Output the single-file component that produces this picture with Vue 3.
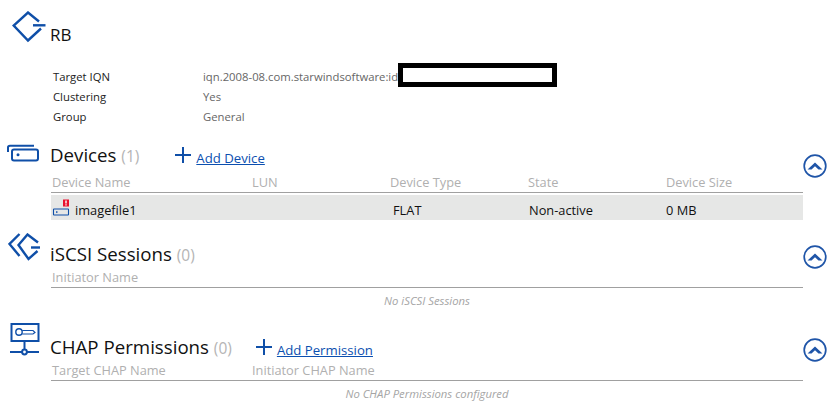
<script setup>
const props_ = [
  { k: 'Target IQN', v: 'iqn.2008-08.com.starwindsoftware:id', redacted: true },
  { k: 'Clustering', v: 'Yes' },
  { k: 'Group', v: 'General' },
]
const deviceCols = ['Device Name', 'LUN', 'Device Type', 'State', 'Device Size']
</script>

<template>
  <div class="page">
    <header class="head">
      <svg class="head-icon" width="34" height="32" viewBox="0 0 34 32" fill="none" stroke="#0f4fa8" stroke-width="2.4">
        <path d="M27 10.5 L16 1.5 L1.7 14.5 L16 29.5 L29 17.5" />
        <path d="M21 14.3 H33.5" />
      </svg>
      <h1 class="name">RB</h1>
    </header>

    <dl class="props">
      <template v-for="p in props_" :key="p.k">
        <dt>{{ p.k }}</dt>
        <dd>{{ p.v }}<span v-if="p.redacted" class="redact"></span></dd>
      </template>
    </dl>

    <section class="sec sec-dev">
      <svg class="icon" width="33" height="18" viewBox="0 0 33 18" fill="none" stroke="#0f4fa8" stroke-width="2">
        <path d="M1 8 V3.5 Q1 1.7 3 1.7 H27" />
        <rect x="5" y="5.5" width="26" height="11" rx="2" />
        <circle cx="11" cy="10.8" r="1.5" fill="#0f4fa8" stroke="none" />
      </svg>
      <div class="body">
        <div class="title-row">
          <h2>Devices <span class="count">(1)</span></h2>
          <a class="add add-dev" href="#"><span class="plus"></span><span class="link">Add Device</span></a>
        </div>
        <div class="cols five">
          <span v-for="c in deviceCols" :key="c">{{ c }}</span>
        </div>
        <div class="row five">
          <span class="dev-name">
            <svg width="18" height="20" viewBox="0 0 18 20" fill="none">
              <rect x="11" y="1.5" width="6" height="7" fill="#e8112d" />
              <rect x="13.3" y="2.5" width="1.4" height="3" fill="#fff" />
              <rect x="13.3" y="6.3" width="1.4" height="1.2" fill="#fff" />
              <rect x="1.5" y="11" width="15" height="6" rx="0.5" fill="none" stroke="#0f4fa8" stroke-width="1.1" />
              <rect x="4" y="13.3" width="1.5" height="1.5" fill="#0f4fa8" />
            </svg>
            imagefile1
          </span>
          <span></span>
          <span class="pad-type">FLAT</span>
          <span class="pad-state">Non-active</span>
          <span>0 MB</span>
        </div>
      </div>
      <button class="toggle" aria-label="collapse"><svg width="24" height="24" viewBox="0 0 24 24" fill="none">
        <circle cx="12" cy="12" r="10.8" stroke="#1f55a8" stroke-width="1.7" />
        <path d="M4.5 15.5 L12 8.5 L19.5 15.5 L15.5 15.5 L12 12.3 L8.5 15.5 Z" fill="#1f55a8" />
      </svg></button>
    </section>

    <section class="sec sec-iscsi">
      <svg class="icon" width="33" height="28" viewBox="0 0 33 28" fill="none" stroke="#0f4fa8" stroke-width="2.4">
        <path d="M11.5 1 L1.5 11 L11.5 23" />
        <path d="M30 9.5 L19.5 1.5 L10.5 12 L20.5 26 L29.5 18" />
        <path d="M23 14.5 H32" />
      </svg>
      <div class="body">
        <div class="title-row">
          <h2>iSCSI Sessions <span class="count">(0)</span></h2>
        </div>
        <div class="cols"><span>Initiator Name</span></div>
        <p class="empty">No iSCSI Sessions</p>
      </div>
      <button class="toggle" aria-label="collapse"><svg width="24" height="24" viewBox="0 0 24 24" fill="none">
        <circle cx="12" cy="12" r="10.8" stroke="#1f55a8" stroke-width="1.7" />
        <path d="M4.5 15.5 L12 8.5 L19.5 15.5 L15.5 15.5 L12 12.3 L8.5 15.5 Z" fill="#1f55a8" />
      </svg></button>
    </section>

    <section class="sec sec-chap">
      <svg class="icon" width="30" height="33" viewBox="0 0 30 33" fill="none" stroke="#0f4fa8" stroke-width="2">
        <rect x="1.5" y="1" width="27" height="17" />
        <circle cx="9" cy="9" r="3.2" stroke-width="1.4" />
        <path d="M12.2 7.5 H23 L25 9.5 L23 11 H12.2" stroke-width="1.2" />
        <path d="M14.5 18 V27" />
        <path d="M0 29 H29" />
        <circle cx="14.5" cy="29" r="2.4" fill="#fff" />
      </svg>
      <div class="body">
        <div class="title-row">
          <h2>CHAP Permissions <span class="count">(0)</span></h2>
          <a class="add add-chap" href="#"><span class="plus"></span><span class="link">Add Permission</span></a>
        </div>
        <div class="cols two"><span>Target CHAP Name</span><span>Initiator CHAP Name</span></div>
        <p class="empty">No CHAP Permissions configured</p>
      </div>
      <button class="toggle" aria-label="collapse"><svg width="24" height="24" viewBox="0 0 24 24" fill="none">
        <circle cx="12" cy="12" r="10.8" stroke="#1f55a8" stroke-width="1.7" />
        <path d="M4.5 15.5 L12 8.5 L19.5 15.5 L15.5 15.5 L12 12.3 L8.5 15.5 Z" fill="#1f55a8" />
      </svg></button>
    </section>
  </div>
</template>

<style>
html, body { margin: 0; background: #fff; overflow: hidden; }
</style>

<style scoped>
.page {
  width: 832px;
  height: 415px;
  overflow: hidden;
  box-sizing: border-box;
  font-family: "Open Sans", "Noto Sans", sans-serif;
  color: #111;
  padding-top: 11px;
}
.head { display: flex; align-items: flex-start; padding-left: 12px; height: 43px; }
.head-icon { flex: none; }
.name { margin: 12px 0 0 4px; font-size: 17px; line-height: 24px; font-weight: 400; }
.props {
  margin: 13px 0 0 53px;
  display: grid;
  grid-template-columns: 150px 1fr;
  grid-auto-rows: 20px;
  font-size: 11.3px;
  line-height: 20px;
}
.props dt { color: #222; }
.props dd { margin: 0; color: #666; display: flex; align-items: center; }
.redact {
  width: 149px;
  height: 14px;
  border: 5px solid #000;
  margin-left: 0;
  margin-top: -4px;
  flex: none;
}
.sec { display: grid; grid-template-columns: 51px 752px 29px; height: 90px; }
.sec-dev { margin-top: 16px; }
.icon { display: block; }
.sec-dev .icon { margin: 1px 0 0 7px; }
.sec-iscsi .icon { margin: 0 0 0 8px; }
.sec-chap .icon { margin: 0 0 0 10px; }
.title-row { display: flex; align-items: flex-start; box-sizing: border-box; margin-left: -1px; }
.sec-dev .title-row { height: 30px; }
.sec-iscsi .title-row { height: 35px; padding-top: 9px; }
.sec-chap .title-row { height: 38px; padding-top: 12px; }
h2 { margin: 0; font-size: 18.7px; line-height: 24px; font-weight: 400; white-space: nowrap; }
.count { color: #b5b5b5; font-size: 15.5px; }
.add { display: inline-flex; align-items: center; height: 24px; text-decoration: none; }
.add-dev { margin-left: 36px; }
.add-chap { margin-left: 24px; }
.plus {
  width: 16px; height: 16px; margin-right: 5px; flex: none;
  background:
    linear-gradient(#0f4fa8, #0f4fa8) center / 100% 2px no-repeat,
    linear-gradient(#0f4fa8, #0f4fa8) center / 2px 100% no-repeat;
}
.link { font-size: 13.2px; text-decoration: underline; color: #0b4fb0; margin-top: 5px; }
.cols {
  display: grid;
  grid-template-columns: 1fr;
  border-bottom: 1px solid #a0a0a0;
  height: 19px;
  font-size: 12.8px;
  line-height: 19px;
  color: #b0b0b0;
  padding-left: 1px;
}
.five { grid-template-columns: 200px 138px 138px 138px 1fr; }
.two { grid-template-columns: 200px 1fr; }
.row {
  display: grid;
  box-sizing: border-box;
  margin-top: 2px;
  height: 25px;
  padding: 5px 0 0 1px;
  background: #e6e7e6;
  font-size: 12.8px;
  line-height: 20px;
  color: #111;
  align-items: center;
}
.pad-type { padding-left: 3px; }
.pad-state { padding-left: 1px; }
.dev-name { display: flex; align-items: center; gap: 5px; height: 20px; }
.dev-name svg { flex: none; margin-top: -5px; }
.empty {
  margin: 0;
  height: 25px;
  line-height: 25px;
  text-align: center;
  font-size: 11.3px;
  font-style: italic;
  color: #a5a5a5;
}
.toggle {
  appearance: none; border: 0; background: none; padding: 0;
  width: 24px; height: 24px; display: block;
}
.sec-dev .toggle { margin-top: 11px; }
.sec-iscsi .toggle { margin-top: 12px; }
.sec-chap .toggle { margin-top: 15px; }
.toggle svg { display: block; }
</style>
